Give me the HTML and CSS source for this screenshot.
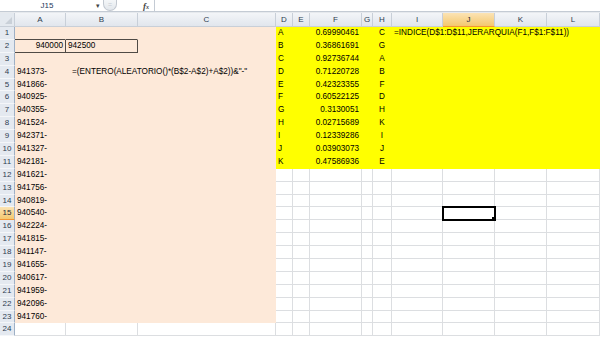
FILE: index.html
```html
<!DOCTYPE html>
<html lang="es">
<head>
    <meta charset="UTF-8">
    <meta name="viewport" content="width=device-width, initial-scale=1.0">
    <title>Libro1 - Excel</title>
    <link rel="stylesheet" href="styles.css">
</head>
<body>
    <div class="formula-bar">
        <div class="name-box">J15</div>
        <span class="name-arrow">▾</span>
        <span class="expand-btn">=</span>
        <span class="fx">f<small>x</small></span>
        <div class="formula-input"></div>
    </div>

    <div class="sheet" id="sheet"></div>

    <script>
        const cols = ['A', 'B', 'C', 'D', 'E', 'F', 'G', 'H', 'I', 'J', 'K', 'L'];

        // valores de la hoja, por fila
        const data = {
            1: { D: 'A', F: '0.69990461', H: 'C', I: '=INDICE(D$1:D$11,JERARQUIA(F1,F$1:F$11))' },
            2: { A: '940000', B: '942500', D: 'B', F: '0.36861691', H: 'G' },
            3: { D: 'C', F: '0.92736744', H: 'A' },
            4: { A: '941373-', B: '=(ENTERO(ALEATORIO()*(B$2-A$2)+A$2))&"-"', D: 'D', F: '0.71220728', H: 'B' },
            5: { A: '941866-', D: 'E', F: '0.42323355', H: 'F' },
            6: { A: '940925-', D: 'F', F: '0.60522125', H: 'D' },
            7: { A: '940355-', D: 'G', F: '0.3130051', H: 'H' },
            8: { A: '941524-', D: 'H', F: '0.02715689', H: 'K' },
            9: { A: '942371-', D: 'I', F: '0.12339286', H: 'I' },
            10: { A: '941327-', D: 'J', F: '0.03903073', H: 'J' },
            11: { A: '942181-', D: 'K', F: '0.47586936', H: 'E' },
            12: { A: '941621-' },
            13: { A: '941756-' },
            14: { A: '940819-' },
            15: { A: '940540-' },
            16: { A: '942224-' },
            17: { A: '941815-' },
            18: { A: '941147-' },
            19: { A: '941655-' },
            20: { A: '940617-' },
            21: { A: '941959-' },
            22: { A: '942096-' },
            23: { A: '941760-' }
        };

        const spans = { B4: 2, I1: 4 };
        const selected = { col: 'J', row: 15 };

        function cellClass(col, row) {
            const classes = ['cell'];
            const ci = cols.indexOf(col);
            if (ci <= 2 && row <= 23) classes.push('peach');
            if (ci >= 3 && row <= 11) classes.push('yellow');
            if (col === 'F' || (col === 'A' && row === 2)) classes.push('right');
            if (col === 'H') classes.push('center');
            if ((col === 'A' || col === 'B') && row === 2) classes.push('boxed');
            if ((col === 'A' || col === 'B') && row === 1) classes.push('box-top');
            if (col + row === 'B4') classes.push('indent');
            if (col === selected.col && row === selected.row) classes.push('selected');
            return classes.join(' ');
        }

        function buildSheet() {
            let html = '<div class="corner"></div>';
            cols.forEach(col => {
                html += `<div class="col-head${col === selected.col ? ' active' : ''}">${col}</div>`;
            });

            for (let row = 1; row <= 24; row++) {
                const values = data[row] || {};
                html += `<div class="row-head${row === selected.row ? ' active' : ''}">${row}</div>`;
                let skip = 0;
                cols.forEach(col => {
                    if (skip > 0) { skip--; return; }
                    const span = spans[col + row] || 1;
                    skip = span - 1;
                    const spanClass = span > 1 ? ` span-${span}` : '';
                    html += `<div class="${cellClass(col, row)}${spanClass}">${values[col] || ''}</div>`;
                });
            }
            document.getElementById('sheet').innerHTML = html;
        }

        document.addEventListener('DOMContentLoaded', buildSheet);
    </script>
</body>
</html>
```

FILE: styles.css
```css
body {
    margin: 0;
    width: 600px;
    height: 337px;
    overflow: hidden;
    background: #fff;
    font-family: "Liberation Sans", Arial, sans-serif;
    color: #000;
}
.formula-bar {
    display: flex;
    align-items: center;
    height: 11px;
    border-bottom: 1px solid #c4cbd4;
    background: #fff;
    font-size: 8px;
    color: #1e395b;
}
.name-box {
    width: 94px;
    text-align: center;
    line-height: 11px;
}
.name-arrow {
    width: 8px;
    font-size: 7px;
    color: #444;
    text-align: center;
}
.expand-btn {
    width: 14px;
    height: 11px;
    margin-left: 1px;
    box-sizing: border-box;
    border: 1px solid #c2c8d0;
    border-top: none;
    border-radius: 0 0 7px 7px;
    background: linear-gradient(#f4f6f8, #e3e7ec);
    color: #c5cbd2;
    font-size: 7px;
    line-height: 9px;
    text-align: center;
}
.fx {
    margin-left: 26px;
    width: 11px;
    font-family: "Liberation Serif", serif;
    font-style: italic;
    font-weight: bold;
    font-size: 9px;
    color: #444;
}
.fx small {
    font-size: 6px;
}
.formula-input {
    flex: 1;
    height: 11px;
    border-left: 1px solid #c4cbd4;
    background: #fff;
}
.sheet {
    display: grid;
    grid-template-columns: 15px 51px 72px 138px 17px 17px 52px 11px 19px 51px 52px 52px 53px;
    grid-template-rows: 14px repeat(24, 12.9px);
    border-top: 1px solid #e6e9ed;
}
.corner,
.col-head,
.row-head {
    box-sizing: border-box;
    background: linear-gradient(#f3f5f8, #e1e6ed);
    border-right: 1px solid #c8cfd8;
    border-bottom: 1px solid #c8cfd8;
    color: #2f3d50;
    font-size: 8px;
    text-align: center;
}
.corner {
    position: relative;
    background: #e4e9ef;
}
.corner::after {
    content: "";
    position: absolute;
    right: 2px;
    bottom: 2px;
    border-left: 7px solid transparent;
    border-bottom: 7px solid #c9d0d8;
}
.col-head {
    line-height: 13px;
}
.row-head {
    background: #e4e9f0;
    border-bottom-color: #f4f6f9;
    border-right-color: #9eb0c6;
    line-height: 12px;
}
.col-head.active,
.row-head.active {
    background: linear-gradient(#fbe3b4, #f4c86f);
    border-bottom-color: #f29536;
    color: #1f2a38;
}
.cell {
    box-sizing: border-box;
    border-right: 1px solid #dcdee1;
    border-bottom: 1px solid #dcdee1;
    padding: 0 2px;
    font-size: 8.2px;
    line-height: 12px;
    white-space: nowrap;
    overflow: hidden;
}
.peach {
    background: #fde9d9;
    border-color: #fde9d9;
}
.yellow {
    background: #ffff00;
    border-color: #ffff00;
}
.right {
    text-align: right;
}
.center {
    text-align: center;
}
.indent {
    padding-left: 6px;
}
.span-2 {
    grid-column: span 2;
}
.span-4 {
    grid-column: span 4;
}
.boxed {
    border-right-color: #4f4a45;
    border-bottom-color: #4f4a45;
}
.box-top {
    border-bottom-color: #4f4a45;
}
.selected {
    position: relative;
    outline: 2px solid #000;
    outline-offset: -1px;
}
.selected::after {
    content: "";
    position: absolute;
    right: -3px;
    bottom: -3px;
    width: 4px;
    height: 4px;
    background: #000;
    border: 1px solid #fff;
}
```
